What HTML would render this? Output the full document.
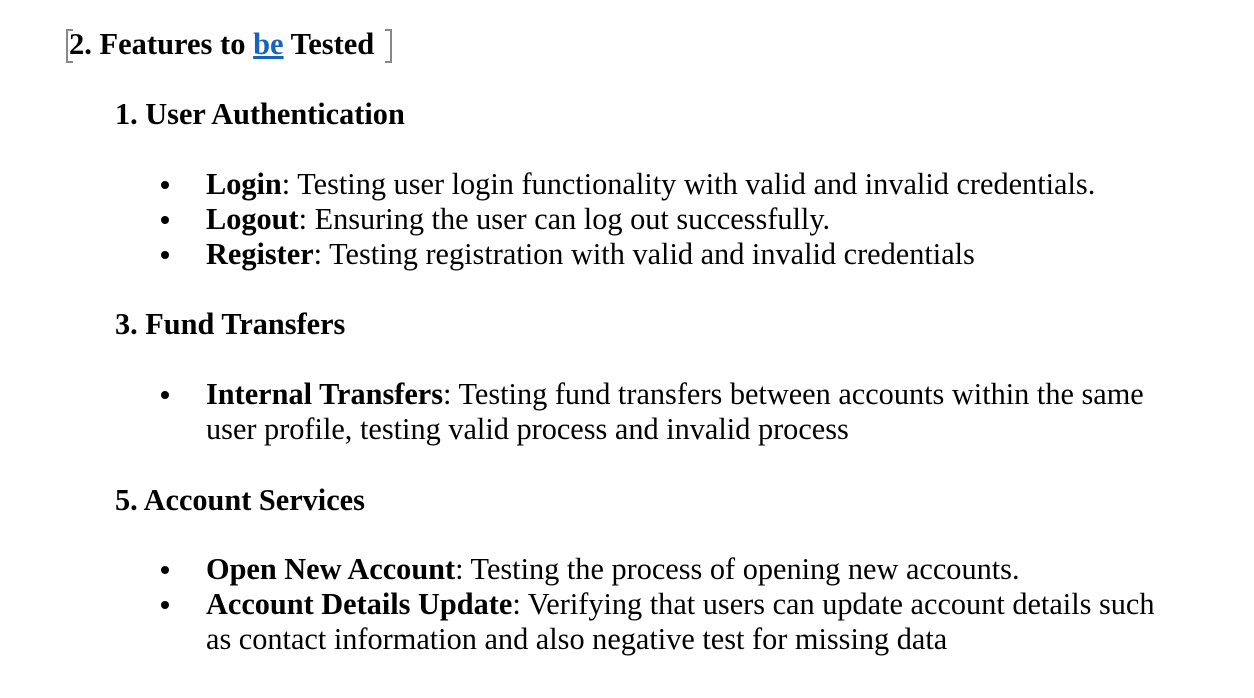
<!DOCTYPE html>
<html><head><style>
body{margin:0;width:1254px;height:698px;background:#fff;font-family:"Liberation Serif",serif;font-size:30.3px;color:#000;position:relative;overflow:hidden}
.l{position:absolute;white-space:nowrap;line-height:35px}
.b{font-weight:bold}
.dot{position:absolute;width:8px;height:8px;border-radius:50%;background:#000}
.br{position:absolute;width:5px;height:30px;border:2px solid #888}
</style></head><body>
<div class="br" style="left:66px;top:29px;border-right:none"></div>
<div class="br" style="left:385px;top:29px;border-left:none"></div>
<div class="l b" style="left:69px;top:27px;font-size:30.5px">2. Features to <span style="color:#1565c0;text-decoration:underline">be</span> Tested</div>
<div class="l b" style="left:115px;top:97px">1. User Authentication</div>
<div class="dot" style="left:161px;top:181px"></div>
<div class="l" style="left:206px;top:167px"><b>Login</b>: Testing user login functionality with valid and invalid credentials.</div>
<div class="dot" style="left:161px;top:216px"></div>
<div class="l" style="left:206px;top:202px"><b>Logout</b>: Ensuring the user can log out successfully.</div>
<div class="dot" style="left:161px;top:251px"></div>
<div class="l" style="left:206px;top:237px"><b>Register</b>: Testing registration with valid and invalid credentials</div>
<div class="l b" style="left:115px;top:307px">3. Fund Transfers</div>
<div class="dot" style="left:161px;top:391px"></div>
<div class="l" style="left:206px;top:377px"><b>Internal Transfers</b>: Testing fund transfers between accounts within the same</div>
<div class="l" style="left:206px;top:412px">user profile, testing valid process and invalid process</div>
<div class="l b" style="left:115px;top:483px">5. Account Services</div>
<div class="dot" style="left:161px;top:566px"></div>
<div class="l" style="left:206px;top:552px"><b>Open New Account</b>: Testing the process of opening new accounts.</div>
<div class="dot" style="left:161px;top:601px"></div>
<div class="l" style="left:206px;top:587px"><b>Account Details Update</b>: Verifying that users can update account details such</div>
<div class="l" style="left:206px;top:622px">as contact information and also negative test for missing data</div>
</body></html>
